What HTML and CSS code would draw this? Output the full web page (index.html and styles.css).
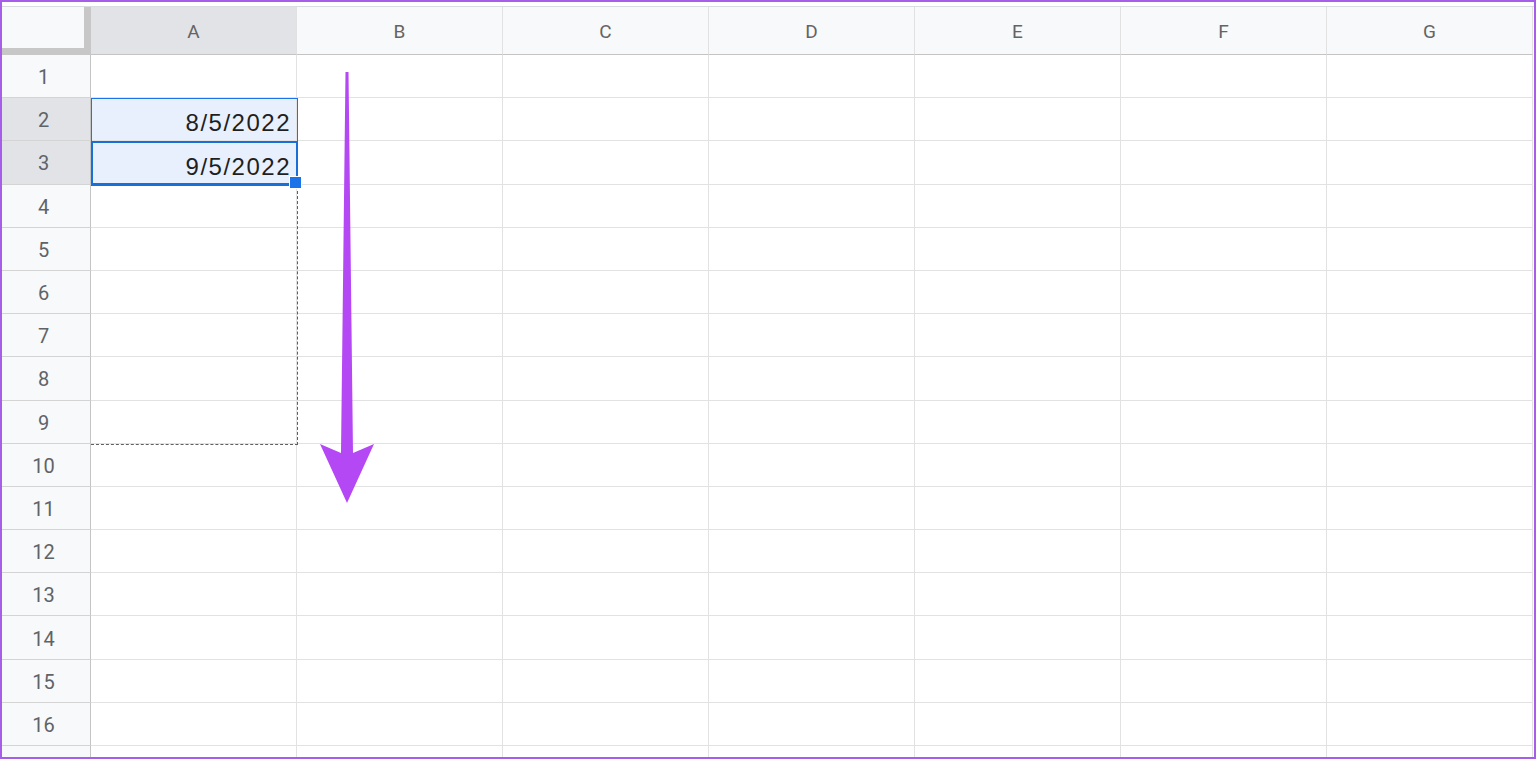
FILE: index.html
```html
<!DOCTYPE html>
<html>
<head>
<meta charset="utf-8">
<link rel="stylesheet" href="styles.css">
</head>
<body>
<div class="frame">
  <div class="topbar"></div>
  <div class="sheet">
    <div class="grid">
      <div class="corner"></div>
      <div class="ch hl">A</div><div class="ch">B</div><div class="ch">C</div><div class="ch">D</div><div class="ch">E</div><div class="ch">F</div><div class="ch">G</div>

      <div class="rh">1</div><div class="c"></div><div class="c"></div><div class="c"></div><div class="c"></div><div class="c"></div><div class="c"></div><div class="c"></div>
      <div class="rh hl">2</div><div class="c sel">8/5/2022</div><div class="c"></div><div class="c"></div><div class="c"></div><div class="c"></div><div class="c"></div><div class="c"></div>
      <div class="rh hl">3</div><div class="c sel">9/5/2022</div><div class="c"></div><div class="c"></div><div class="c"></div><div class="c"></div><div class="c"></div><div class="c"></div>
      <div class="rh">4</div><div class="c"></div><div class="c"></div><div class="c"></div><div class="c"></div><div class="c"></div><div class="c"></div><div class="c"></div>
      <div class="rh">5</div><div class="c"></div><div class="c"></div><div class="c"></div><div class="c"></div><div class="c"></div><div class="c"></div><div class="c"></div>
      <div class="rh">6</div><div class="c"></div><div class="c"></div><div class="c"></div><div class="c"></div><div class="c"></div><div class="c"></div><div class="c"></div>
      <div class="rh">7</div><div class="c"></div><div class="c"></div><div class="c"></div><div class="c"></div><div class="c"></div><div class="c"></div><div class="c"></div>
      <div class="rh">8</div><div class="c"></div><div class="c"></div><div class="c"></div><div class="c"></div><div class="c"></div><div class="c"></div><div class="c"></div>
      <div class="rh">9</div><div class="c"></div><div class="c"></div><div class="c"></div><div class="c"></div><div class="c"></div><div class="c"></div><div class="c"></div>
      <div class="rh">10</div><div class="c"></div><div class="c"></div><div class="c"></div><div class="c"></div><div class="c"></div><div class="c"></div><div class="c"></div>
      <div class="rh">11</div><div class="c"></div><div class="c"></div><div class="c"></div><div class="c"></div><div class="c"></div><div class="c"></div><div class="c"></div>
      <div class="rh">12</div><div class="c"></div><div class="c"></div><div class="c"></div><div class="c"></div><div class="c"></div><div class="c"></div><div class="c"></div>
      <div class="rh">13</div><div class="c"></div><div class="c"></div><div class="c"></div><div class="c"></div><div class="c"></div><div class="c"></div><div class="c"></div>
      <div class="rh">14</div><div class="c"></div><div class="c"></div><div class="c"></div><div class="c"></div><div class="c"></div><div class="c"></div><div class="c"></div>
      <div class="rh">15</div><div class="c"></div><div class="c"></div><div class="c"></div><div class="c"></div><div class="c"></div><div class="c"></div><div class="c"></div>
      <div class="rh">16</div><div class="c"></div><div class="c"></div><div class="c"></div><div class="c"></div><div class="c"></div><div class="c"></div><div class="c"></div>
      <div class="rh"></div><div class="c"></div><div class="c"></div><div class="c"></div><div class="c"></div><div class="c"></div><div class="c"></div><div class="c"></div>
    </div>

    <div class="range"></div>
    <div class="active"></div>
    <div class="fill-preview"></div>
    <div class="handle"></div>

    <svg class="arrow" width="1536" height="759" viewBox="0 0 1536 759" xmlns="http://www.w3.org/2000/svg">
      <polygon points="345.5,72 348.5,72 353,453 374,444 347,503 320,444 341,453" fill="#b548f5"/>
    </svg>
  </div>
</div>
</body>
</html>
```
FILE: styles.css
```css
* { box-sizing: border-box; }

html, body {
  margin: 0;
  padding: 0;
  background: #ffffff;
}

.frame {
  width: 1536px;
  height: 759px;
  border: 2px solid #a65de8;
  overflow: hidden;
  display: flex;
  flex-direction: column;
  background: #ffffff;
}

.topbar {
  height: 5px;
  flex: none;
  background: #ffffff;
  border-bottom: 1px solid #dadce0;
}

.sheet {
  position: relative;
  flex: 1;
}

.grid {
  display: grid;
  grid-template-columns: 89px repeat(7, 206px);
  grid-template-rows: 48px;
  grid-auto-rows: 43.2px;
}

.corner {
  background: #f8f9fa;
  border-right: 7px solid #c7c7c7;
  border-bottom: 7px solid #c7c7c7;
}

.ch {
  background: #f8f9fa;
  border-right: 1px solid #e1e1e1;
  border-bottom: 1px solid #c4c4c4;
  display: flex;
  align-items: center;
  justify-content: center;
  padding-top: 1px;
  font-family: Roboto, "Liberation Sans", sans-serif;
  font-size: 19px;
  color: #646464;
}

.rh {
  background: #f8f9fa;
  border-right: 1px solid #c4c4c4;
  border-bottom: 1px solid #d4d4d4;
  display: flex;
  align-items: center;
  justify-content: center;
  padding: 2px 5px 0 0;
  font-family: Roboto, "Liberation Sans", sans-serif;
  font-size: 20px;
  color: #5f6368;
}

.ch.hl, .rh.hl {
  background: #e1e3e6;
}

.c {
  background: #ffffff;
  border-right: 1px solid #e2e2e2;
  border-bottom: 1px solid #e2e2e2;
  display: flex;
  align-items: flex-end;
  justify-content: flex-end;
  padding: 0 5px 5px 0;
  font-family: "Liberation Sans", Arial, sans-serif;
  font-size: 24px;
  line-height: 24px;
  letter-spacing: 1.5px;
  color: #1f1f1f;
}

.c.sel {
  background: #e8f0fe;
}

.range {
  position: absolute;
  left: 89px;
  top: 91.2px;
  width: 207px;
  height: 87.4px;
  border: 1px solid #1a73e8;
}

.active {
  position: absolute;
  left: 89px;
  top: 134.4px;
  width: 207px;
  height: 44.2px;
  border: 2px solid #1a6fd6;
  border-bottom-width: 3px;
}

.fill-preview {
  position: absolute;
  left: 89px;
  top: 178.6px;
  width: 207px;
  height: 259.2px;
  border-right: 1px dashed #5f5f5f;
  border-bottom: 1px dashed #5f5f5f;
}

.handle {
  position: absolute;
  left: 287px;
  top: 169px;
  width: 13px;
  height: 13px;
  background: #1a73e8;
  border: 1px solid #ffffff;
}

.arrow {
  position: absolute;
  left: -2px;
  top: -7px;
  pointer-events: none;
}
```
